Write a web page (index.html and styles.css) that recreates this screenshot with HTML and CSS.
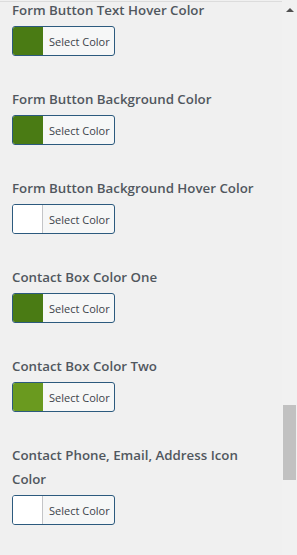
FILE: index.html
```html
<!DOCTYPE html>
<html lang="en">
<head>
    <meta charset="UTF-8">
    <meta name="viewport" content="width=device-width, initial-scale=1.0">
    <title>Customizer Colors</title>
    <link rel="stylesheet" href="styles.css">
</head>
<body>
    <div class="panel">
        <div class="controls">
            <div class="control">
                <span class="control-title">Form Button Text Hover Color</span>
                <button class="color-btn"><span class="swatch dark-green"></span><span class="btn-text">Select Color</span></button>
            </div>
            <div class="control">
                <span class="control-title">Form Button Background Color</span>
                <button class="color-btn"><span class="swatch dark-green"></span><span class="btn-text">Select Color</span></button>
            </div>
            <div class="control">
                <span class="control-title">Form Button Background Hover Color</span>
                <button class="color-btn"><span class="swatch"></span><span class="btn-text">Select Color</span></button>
            </div>
            <div class="control">
                <span class="control-title">Contact Box Color One</span>
                <button class="color-btn"><span class="swatch dark-green"></span><span class="btn-text">Select Color</span></button>
            </div>
            <div class="control">
                <span class="control-title">Contact Box Color Two</span>
                <button class="color-btn"><span class="swatch light-green"></span><span class="btn-text">Select Color</span></button>
            </div>
            <div class="control">
                <span class="control-title">Contact Phone, Email, Address Icon Color</span>
                <button class="color-btn"><span class="swatch"></span><span class="btn-text">Select Color</span></button>
            </div>
        </div>
        <div class="scrollbar">
            <span class="arrow-up"></span>
            <span class="thumb"></span>
        </div>
    </div>
</body>
</html>
```

FILE: styles.css
```css
:root {
    --bg: #f0f0f0;
    --title: #50575e;
    --btn-border: #2c5a7e;
    --btn-bg: #f6f7f7;
    --dark-green: #4a7b14;
    --light-green: #6a9a1f;
}

* {
    margin: 0;
    padding: 0;
    box-sizing: border-box;
}

body {
    background: var(--bg);
    font-family: 'Open Sans', 'Noto Sans', sans-serif;
    height: 555px;
    overflow: hidden;
}

.panel {
    display: flex;
    height: 555px;
}

.controls {
    flex: 1;
    padding: 0 12px;
    margin-top: 1px;
    border-top: 1px solid #dcdcdc;
}

.control {
    display: flex;
    flex-direction: column;
    align-items: flex-start;
    margin-bottom: 31px;
}

.control:first-child {
    margin-top: -4px;
}

.control-title {
    color: var(--title);
    font-size: 13.3px;
    font-weight: 600;
    line-height: 24px;
    padding-right: 12px;
}

.color-btn {
    display: flex;
    align-items: stretch;
    width: 103px;
    height: 30px;
    margin-top: 4px;
    border: 1px solid var(--btn-border);
    border-radius: 3px;
    background: var(--btn-bg);
    overflow: hidden;
    font-family: 'Open Sans', 'Noto Sans', sans-serif;
}

.swatch {
    width: 30px;
    background: #fff;
    border-right: 1px solid #c3c4c7;
}

.swatch.dark-green {
    background: var(--dark-green);
    border-right-color: var(--dark-green);
}

.swatch.light-green {
    background: var(--light-green);
    border-right-color: var(--light-green);
}

.btn-text {
    display: flex;
    align-items: center;
    padding-left: 6px;
    font-size: 11px;
    color: #3c434a;
}

.scrollbar {
    width: 15px;
    background: #f1f1f1;
    display: flex;
    flex-direction: column;
    align-items: center;
}

.arrow-up {
    margin-top: 8px;
    width: 0;
    height: 0;
    border-left: 4px solid transparent;
    border-right: 4px solid transparent;
    border-bottom: 4px solid #505050;
}

.thumb {
    margin-top: 393px;
    width: 13px;
    height: 75px;
    background: #c1c1c1;
}
```
